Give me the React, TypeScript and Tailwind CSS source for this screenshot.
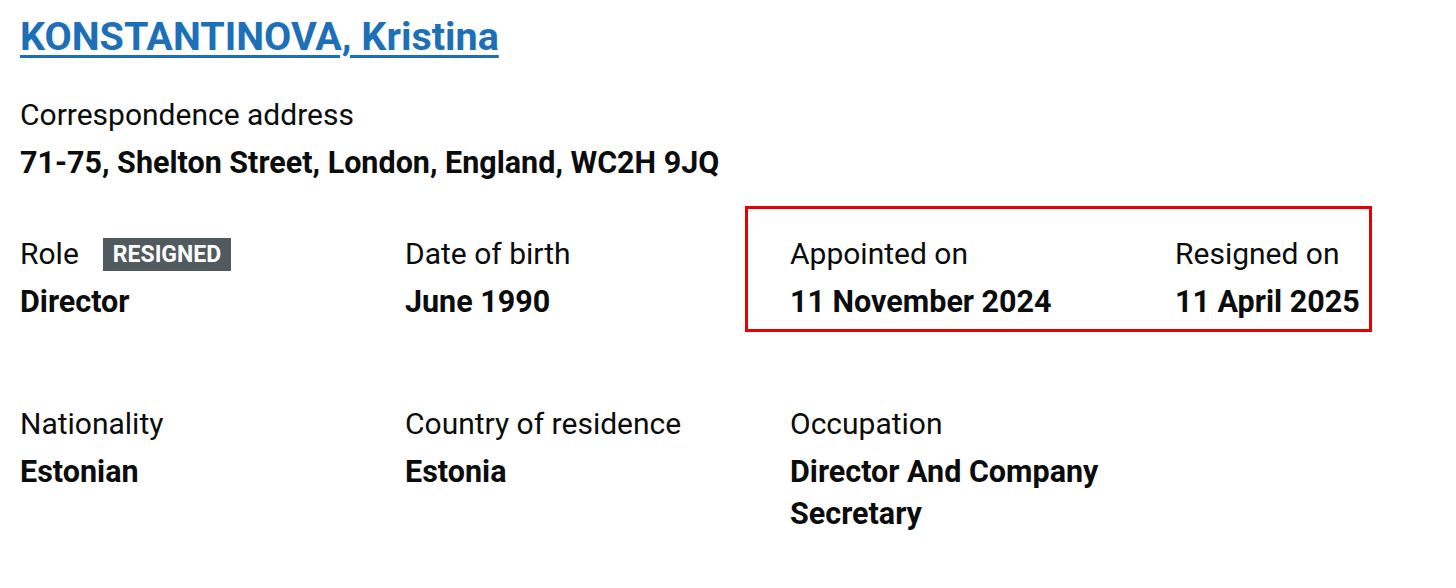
import React from "react";

const font = { fontFamily: "Roboto, 'Liberation Sans', sans-serif" };

function Field({
  label,
  value,
  children,
  last,
}: {
  label: string;
  value: React.ReactNode;
  children?: React.ReactNode;
  last?: boolean;
}) {
  return (
    <div className={last ? "w-[250px] shrink-0" : "w-[385px] shrink-0"}>
      <div className="flex items-center h-[36px] text-[30px] leading-[36px] text-[#0b0c0c]">
        <span>{label}</span>
        {children}
      </div>
      <div className="mt-[9px] text-[30.5px] leading-[42px] font-bold text-[#0b0c0c]">{value}</div>
    </div>
  );
}

export default function App() {
  return (
    <div className="w-[1456px] h-[588px] overflow-hidden bg-white pl-[20px] pt-[14px]" style={font}>
      <a
        href="#"
        className="text-[39.5px] leading-[46px] font-bold text-[#1d70b8] underline decoration-[3px] underline-offset-[5px]"
      >
        KONSTANTINOVA, Kristina
      </a>
      <div className="mt-[37px] text-[30px] leading-[36px] text-[#0b0c0c]">Correspondence address</div>
      <div className="mt-[12px] text-[30.5px] leading-[36px] font-bold text-[#0b0c0c]">
        71-75, Shelton Street, London, England, WC2H 9JQ
      </div>
      <div className="mt-[55px] flex">
        <Field label="Role" value="Director">
          <span className="ml-[24px] bg-[#505a5f] text-white text-[23px] font-bold leading-[33px] h-[33px] px-[10px] uppercase">
            Resigned
          </span>
        </Field>
        <Field label="Date of birth" value="June 1990" />
        <div className="relative flex">
          <div className="absolute left-[-45px] top-[-30px] w-[627px] h-[126px] border-[3px] border-[#e60000]" />
          <Field label="Appointed on" value="11 November 2024" />
          <Field label="Resigned on" value="11 April 2025" last />
        </div>
      </div>
      <div className="mt-[83px] flex">
        <Field label="Nationality" value="Estonian" />
        <Field label="Country of residence" value="Estonia" />
        <Field label="Occupation" value={<span className="block w-[340px]">Director And Company Secretary</span>} last />
      </div>
    </div>
  );
}
